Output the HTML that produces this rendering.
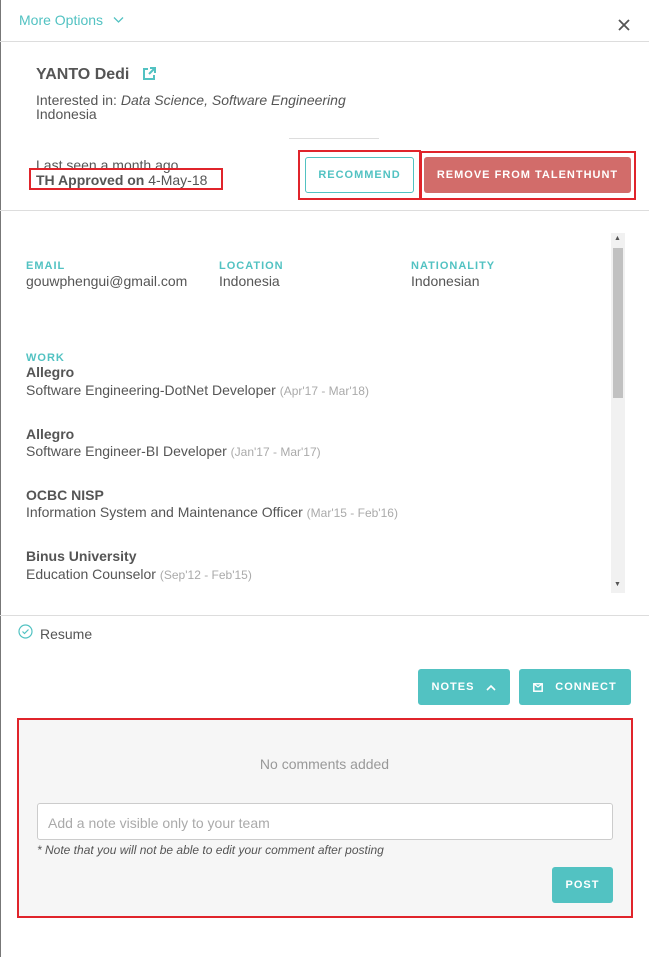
<!DOCTYPE html>
<html><head><style>
*{margin:0;padding:0;box-sizing:border-box}
body{width:649px;height:957px;background:#fff;font-family:"Liberation Sans",sans-serif;color:#555;position:relative;overflow:hidden;font-size:14px}
.a{position:absolute;white-space:nowrap}
.lbl{font-size:11px;font-weight:bold;color:#52c2c2;letter-spacing:1px}
.b{font-weight:bold;color:#555}
.g{color:#aaa;font-size:12px}
.btn{position:absolute;border-radius:3px;font-size:11px;font-weight:bold;letter-spacing:1px;display:flex;align-items:center;justify-content:center}
.red{position:absolute;border:2px solid #e0242b}
</style></head><body>
<div class="a" style="left:0;top:0;width:1px;height:957px;background:#777"></div>
<div class="a" style="left:19px;top:12px;color:#52c2c2;font-size:14px">More Options</div>
<svg class="a" style="left:113px;top:16px" width="11" height="8" viewBox="0 0 11 8"><path d="M1 1.5l4.5 4.5 4.5-4.5" fill="none" stroke="#52c2c2" stroke-width="1.3"/></svg>
<svg class="a" style="left:618px;top:19px" width="12" height="12" viewBox="0 0 12 12"><path d="M1 1l10 10M11 1L1 11" stroke="#555" stroke-width="1.8"/></svg>
<div class="a" style="left:0;top:41px;width:649px;height:1px;background:#ddd"></div>
<div class="a" style="left:36px;top:66px;font-size:16px;font-weight:bold;color:#555">YANTO Dedi</div>
<svg class="a" style="left:142px;top:67px" width="14" height="14" viewBox="0 0 14 14"><path d="M6 2H2v10h10V8" fill="none" stroke="#52c2c2" stroke-width="2"/><path d="M8 1h5v5M13 1L7 7" fill="none" stroke="#52c2c2" stroke-width="2"/></svg>
<div class="a" style="left:36px;top:92px">Interested in: <i>Data Science, Software Engineering</i></div>
<div class="a" style="left:36px;top:106px">Indonesia</div>
<div class="a" style="left:289px;top:138px;width:90px;height:1px;background:#ddd"></div>
<div class="a" style="left:36px;top:157px">Last seen a month ago</div>
<div class="a" style="left:36px;top:172px"><span class="b">TH Approved on</span> 4-May-18</div>
<div class="red" style="left:29px;top:168px;width:194px;height:22px"></div>
<div class="btn" style="left:305px;top:157px;width:109px;height:36px;border:1px solid #52c2c2;color:#52c2c2">RECOMMEND</div>
<div class="red" style="left:298px;top:150px;width:123px;height:50px"></div>
<div class="btn" style="left:424px;top:157px;width:207px;height:36px;background:#d26c6a;color:#fff">REMOVE FROM TALENTHUNT</div>
<div class="red" style="left:420px;top:151px;width:216px;height:49px"></div>
<div class="a" style="left:0;top:210px;width:649px;height:1px;background:#ddd"></div>
<div class="a lbl" style="left:26px;top:260px">EMAIL</div>
<div class="a" style="left:26px;top:273px">gouwphengui@gmail.com</div>
<div class="a lbl" style="left:219px;top:260px">LOCATION</div>
<div class="a" style="left:219px;top:273px">Indonesia</div>
<div class="a lbl" style="left:411px;top:260px">NATIONALITY</div>
<div class="a" style="left:411px;top:273px">Indonesian</div>
<div class="a lbl" style="left:26px;top:352px">WORK</div>
<div class="a b" style="left:26px;top:364px">Allegro</div>
<div class="a" style="left:26px;top:382px">Software Engineering-DotNet Developer <span class="g">(Apr'17 - Mar'18)</span></div>
<div class="a b" style="left:26px;top:426px">Allegro</div>
<div class="a" style="left:26px;top:443px">Software Engineer-BI Developer <span class="g">(Jan'17 - Mar'17)</span></div>
<div class="a b" style="left:26px;top:487px">OCBC NISP</div>
<div class="a" style="left:26px;top:504px">Information System and Maintenance Officer <span class="g">(Mar'15 - Feb'16)</span></div>
<div class="a b" style="left:26px;top:548px">Binus University</div>
<div class="a" style="left:26px;top:566px">Education Counselor <span class="g">(Sep'12 - Feb'15)</span></div>
<div class="a" style="left:611px;top:233px;width:14px;height:360px;background:#f1f1f1"></div>
<div class="a" style="left:613px;top:248px;width:10px;height:150px;background:#c1c1c1"></div>
<div class="a" style="left:614px;top:235px;font-size:7px;color:#555">▲</div>
<div class="a" style="left:614px;top:581px;font-size:7px;color:#555">▼</div>
<div class="a" style="left:0;top:615px;width:649px;height:1px;background:#ddd"></div>
<svg class="a" style="left:18px;top:624px" width="15" height="15" viewBox="0 0 15 15"><circle cx="7.5" cy="7.5" r="6.5" fill="none" stroke="#52c2c2" stroke-width="1.2"/><path d="M4.5 7.5l2 2 4-4" fill="none" stroke="#52c2c2" stroke-width="1.2"/></svg>
<div class="a" style="left:40px;top:626px">Resume</div>
<div class="btn" style="left:418px;top:669px;width:92px;height:36px;background:#52c2c2;color:#fff">NOTES
<svg style="margin-left:12px" width="10" height="7" viewBox="0 0 10 7"><path d="M1 6l4-4 4 4" fill="none" stroke="#fff" stroke-width="1.6"/></svg></div>
<div class="btn" style="left:519px;top:669px;width:112px;height:36px;background:#52c2c2;color:#fff"><svg style="margin-right:12px" width="10" height="9" viewBox="0 0 10 9"><rect x="0.8" y="0.8" width="8.4" height="7.4" fill="none" stroke="#fff" stroke-width="1.5"/><path d="M1 1l4 3 4-3" fill="none" stroke="#fff" stroke-width="1.2"/></svg>CONNECT</div>
<div class="a" style="left:17px;top:718px;width:616px;height:200px;background:#f6f6f6;border:2px solid #e0242b"></div>
<div class="a" style="left:0;top:756px;width:649px;text-align:center;color:#999">No comments added</div>
<div class="a" style="left:37px;top:803px;width:576px;height:37px;background:#fff;border:1px solid #ccc;border-radius:3px;padding:11px 10px;color:#aaa">Add a note visible only to your team</div>
<div class="a" style="left:37px;top:843px;font-size:12px;font-style:italic;color:#555">* Note that you will not be able to edit your comment after posting</div>
<div class="btn" style="left:552px;top:867px;width:61px;height:36px;background:#52c2c2;color:#fff">POST</div>
</body></html>
